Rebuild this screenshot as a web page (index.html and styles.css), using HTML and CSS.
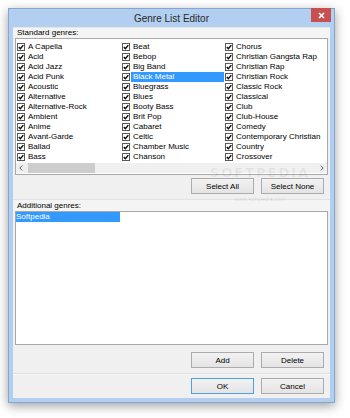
FILE: index.html
```html
<!DOCTYPE html>
<html>
<head>
<meta charset="utf-8">
<link rel="stylesheet" href="styles.css">
</head>
<body>
<svg width="0" height="0" class="defs">
  <defs>
    <g id="chk">
      <rect x="0.5" y="0.5" width="7" height="7" fill="#fff" stroke="#5a5a5a"/>
      <path d="M1.8 4.1 L3.4 5.7 L6.3 2.1" fill="none" stroke="#111" stroke-width="1.5"/>
    </g>
  </defs>
</svg>
<div class="window">
  <div class="titlebar">
    <span class="title">Genre List Editor</span>
    <div class="close">
      <svg width="7" height="7" viewBox="0 0 7 7"><path d="M1 1 L6 6 M6 1 L1 6" stroke="#fff" stroke-width="1.6"/></svg>
    </div>
  </div>
  <div class="client">
    <div class="band">Standard genres:</div>
    <div class="listbox std">
      <div class="grid">
        <div class="item"><svg class="cb"><use href="#chk"/></svg><span class="lbl">A Capella</span></div>
        <div class="item"><svg class="cb"><use href="#chk"/></svg><span class="lbl">Acid</span></div>
        <div class="item"><svg class="cb"><use href="#chk"/></svg><span class="lbl">Acid Jazz</span></div>
        <div class="item"><svg class="cb"><use href="#chk"/></svg><span class="lbl">Acid Punk</span></div>
        <div class="item"><svg class="cb"><use href="#chk"/></svg><span class="lbl">Acoustic</span></div>
        <div class="item"><svg class="cb"><use href="#chk"/></svg><span class="lbl">Alternative</span></div>
        <div class="item"><svg class="cb"><use href="#chk"/></svg><span class="lbl">Alternative-Rock</span></div>
        <div class="item"><svg class="cb"><use href="#chk"/></svg><span class="lbl">Ambient</span></div>
        <div class="item"><svg class="cb"><use href="#chk"/></svg><span class="lbl">Anime</span></div>
        <div class="item"><svg class="cb"><use href="#chk"/></svg><span class="lbl">Avant-Garde</span></div>
        <div class="item"><svg class="cb"><use href="#chk"/></svg><span class="lbl">Ballad</span></div>
        <div class="item"><svg class="cb"><use href="#chk"/></svg><span class="lbl">Bass</span></div>

        <div class="item"><svg class="cb"><use href="#chk"/></svg><span class="lbl">Beat</span></div>
        <div class="item"><svg class="cb"><use href="#chk"/></svg><span class="lbl">Bebop</span></div>
        <div class="item"><svg class="cb"><use href="#chk"/></svg><span class="lbl">Big Band</span></div>
        <div class="item"><svg class="cb"><use href="#chk"/></svg><span class="lbl sel">Black Metal</span></div>
        <div class="item"><svg class="cb"><use href="#chk"/></svg><span class="lbl">Bluegrass</span></div>
        <div class="item"><svg class="cb"><use href="#chk"/></svg><span class="lbl">Blues</span></div>
        <div class="item"><svg class="cb"><use href="#chk"/></svg><span class="lbl">Booty Bass</span></div>
        <div class="item"><svg class="cb"><use href="#chk"/></svg><span class="lbl">Brit Pop</span></div>
        <div class="item"><svg class="cb"><use href="#chk"/></svg><span class="lbl">Cabaret</span></div>
        <div class="item"><svg class="cb"><use href="#chk"/></svg><span class="lbl">Celtic</span></div>
        <div class="item"><svg class="cb"><use href="#chk"/></svg><span class="lbl">Chamber Music</span></div>
        <div class="item"><svg class="cb"><use href="#chk"/></svg><span class="lbl">Chanson</span></div>

        <div class="item"><svg class="cb"><use href="#chk"/></svg><span class="lbl">Chorus</span></div>
        <div class="item"><svg class="cb"><use href="#chk"/></svg><span class="lbl">Christian Gangsta Rap</span></div>
        <div class="item"><svg class="cb"><use href="#chk"/></svg><span class="lbl">Christian Rap</span></div>
        <div class="item"><svg class="cb"><use href="#chk"/></svg><span class="lbl">Christian Rock</span></div>
        <div class="item"><svg class="cb"><use href="#chk"/></svg><span class="lbl">Classic Rock</span></div>
        <div class="item"><svg class="cb"><use href="#chk"/></svg><span class="lbl">Classical</span></div>
        <div class="item"><svg class="cb"><use href="#chk"/></svg><span class="lbl">Club</span></div>
        <div class="item"><svg class="cb"><use href="#chk"/></svg><span class="lbl">Club-House</span></div>
        <div class="item"><svg class="cb"><use href="#chk"/></svg><span class="lbl">Comedy</span></div>
        <div class="item"><svg class="cb"><use href="#chk"/></svg><span class="lbl">Contemporary Christian</span></div>
        <div class="item"><svg class="cb"><use href="#chk"/></svg><span class="lbl">Country</span></div>
        <div class="item"><svg class="cb"><use href="#chk"/></svg><span class="lbl">Crossover</span></div>
      </div>
      <div class="hscroll">
        <div class="arrow"><svg width="4" height="6" viewBox="0 0 4 6"><path d="M3.2 0.5 L0.8 3 L3.2 5.5" fill="none" stroke="#606060" stroke-width="1"/></svg></div>
        <div class="track"><div class="thumb"></div></div>
        <div class="arrow"><svg width="4" height="6" viewBox="0 0 4 6"><path d="M0.8 0.5 L3.2 3 L0.8 5.5" fill="none" stroke="#606060" stroke-width="1"/></svg></div>
      </div>
    </div>
    <div class="btnrow first">
      <button class="btn">Select All</button>
      <button class="btn">Select None</button>
    </div>
    <div class="band band2">Additional genres:</div>
    <div class="listbox add">
      <div class="row"><span class="sel">Softpedia</span></div>
    </div>
    <div class="btnrow second">
      <button class="btn">Add</button>
      <button class="btn">Delete</button>
    </div>
    <div class="sep"></div>
    <div class="btnrow third">
      <button class="btn default">OK</button>
      <button class="btn">Cancel</button>
    </div>
  </div>
</div>
<div class="watermark">
  <div class="wm-big">SOFTPEDIA</div>
  <div class="wm-small">www.softpedia.com</div>
</div>
</body>
</html>
```

FILE: styles.css
```css
html, body {
  margin: 0;
  padding: 0;
  background: #ffffff;
}
body {
  width: 350px;
  height: 418px;
  position: relative;
  overflow: hidden;
  font-family: "Liberation Sans", Arial, sans-serif;
  font-size: 8px;
  color: #000;
}
.defs {
  position: absolute;
  width: 0;
  height: 0;
}
.window {
  position: relative;
  box-sizing: border-box;
  margin: 8px 0 0 8px;
  width: 327px;
  height: 395px;
  background: #b2cef0;
  border: 1px solid #86a6d2;
  padding: 0 4px 4px 4px;
  box-shadow: 0 3px 10px rgba(0, 0, 0, 0.38);
}
.titlebar {
  height: 19px;
  display: flex;
  align-items: center;
  justify-content: center;
}
.title {
  font-size: 10px;
  color: #2a2a2a;
  line-height: 19px;
}
.close {
  position: absolute;
  top: -1px;
  right: 3px;
  width: 20px;
  height: 14px;
  background: #c75050;
  display: flex;
  align-items: center;
  justify-content: center;
}
.close svg {
  display: block;
}
.client {
  box-sizing: border-box;
  width: 317px;
  height: 370px;
  background: #f0f0f0;
  display: flex;
  flex-direction: column;
}
.band {
  height: 10px;
  line-height: 10px;
  padding-left: 4px;
  background: #f4f4f4;
  border-top: 1px solid #e6e6e6;
  margin-top: -1px;
}
.listbox {
  box-sizing: border-box;
  margin: 0 2px;
  background: #fff;
  border: 1px solid #a9a9a9;
}
.std {
  height: 137px;
  padding-top: 3px;
}
.grid {
  display: grid;
  grid-auto-flow: column;
  grid-template-rows: repeat(12, 10px);
  grid-template-columns: 105px 103px 1fr;
}
.item {
  display: flex;
  align-items: center;
  height: 10px;
  padding-left: 1px;
}
.cb {
  width: 8px;
  height: 8px;
  flex: none;
}
.lbl {
  flex: 1;
  height: 10px;
  line-height: 10px;
  margin-left: 1px;
  padding-left: 2px;
  white-space: nowrap;
}
.sel {
  background: #3399ff;
  color: #fff;
}
.hscroll {
  display: flex;
  align-items: center;
  height: 10px;
  margin-top: 1px;
  background: #f0f0f0;
}
.arrow {
  width: 10px;
  height: 10px;
  display: flex;
  align-items: center;
  justify-content: center;
  flex: none;
}
.track {
  flex: 1;
  height: 10px;
  padding-left: 2px;
}
.thumb {
  width: 67px;
  height: 10px;
  background: #cdcdcd;
}
.btnrow {
  display: flex;
  justify-content: flex-end;
  gap: 7px;
  padding-right: 6px;
}
.btnrow.first {
  margin-top: 3px;
}
.btnrow.second {
  margin-top: 7px;
}
.btnrow.third {
  margin-top: 3px;
}
.btn {
  box-sizing: border-box;
  width: 63px;
  height: 16px;
  margin: 0;
  padding: 0;
  font-family: "Liberation Sans", Arial, sans-serif;
  font-size: 8px;
  color: #000;
  background: linear-gradient(#f2f2f2, #e4e4e4);
  border: 1px solid #acacac;
  border-radius: 0;
}
.btn.default {
  border-color: #4d9fe8;
}
.band2 {
  height: 11px;
  line-height: 12px;
  margin-top: 5px;
  border-top: 1px solid #e2e2e2;
}
.add {
  height: 134px;
}
.row {
  height: 10px;
  line-height: 10px;
}
.row .sel {
  display: inline-block;
  width: 104px;
  height: 10px;
}
.sep {
  margin-top: 5px;
  height: 1px;
  background: #dedede;
  border-bottom: 1px solid #fafafa;
}
.watermark {
  position: absolute;
  left: 205px;
  top: 166px;
  width: 110px;
  text-align: center;
  pointer-events: none;
}
.wm-big {
  font-family: "DejaVu Sans", sans-serif;
  font-weight: bold;
  font-size: 13px;
  letter-spacing: 2px;
  color: rgba(0, 0, 0, 0.06);
  line-height: 13px;
}
.wm-small {
  font-size: 6px;
  color: rgba(0, 0, 0, 0.12);
  line-height: 7px;
  margin-top: 17px;
}
```
